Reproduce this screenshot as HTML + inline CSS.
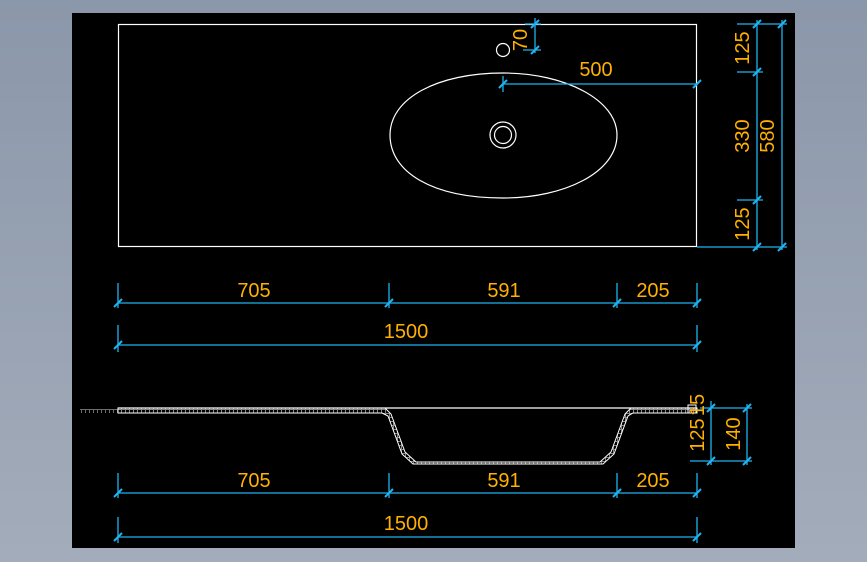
<!DOCTYPE html>
<html><head><meta charset="utf-8"><style>
html,body{margin:0;padding:0;width:867px;height:562px;overflow:hidden;background:#939eb0}
svg{display:block}
text{font-family:"Liberation Sans Narrow","Liberation Sans",sans-serif;fill:#ffb000;font-size:20px}
</style></head><body>
<svg width="867" height="562" viewBox="0 0 867 562" xmlns="http://www.w3.org/2000/svg">
<defs>
<linearGradient id="bg" x1="0" y1="0" x2="0" y2="1"><stop offset="0" stop-color="#8b97aa"/><stop offset="1" stop-color="#a3acba"/></linearGradient>
<pattern id="h" width="4" height="4" patternUnits="userSpaceOnUse"><rect width="4" height="4" fill="#000"/><rect x="0" y="1" width="4" height="1" fill="#888"/><rect x="1" y="0" width="1" height="4" fill="#888"/></pattern>
</defs>
<rect width="867" height="562" fill="url(#bg)"/>
<rect x="72" y="13" width="723" height="535" fill="#000"/>
<g fill="none" stroke="#fff" stroke-width="1.2">
<rect x="118.5" y="24.5" width="578" height="222"/>
<path d="M503,73 C565,73 617,100 617,135 C617,172 565,198 503,198 C432,198 390,172 390,135 C390,98 438,73 503,73Z"/>
<circle cx="503" cy="135" r="13"/><circle cx="503" cy="135" r="8.5"/>
<circle cx="503" cy="50" r="6.5"/>
</g>
<g stroke="#1eb4f0" stroke-width="1.3" fill="none">
<line x1="535" y1="18" x2="535" y2="53"/><line x1="523" y1="50" x2="541" y2="50"/><line x1="525" y1="24" x2="541" y2="24"/>
<line x1="503" y1="84" x2="697" y2="84"/><line x1="503" y1="76" x2="503" y2="92"/>
<line x1="737" y1="24" x2="787" y2="24"/><line x1="737" y1="72" x2="763" y2="72"/><line x1="737" y1="200" x2="763" y2="200"/><line x1="697" y1="247" x2="787" y2="247"/>
<line x1="757" y1="20" x2="757" y2="250"/><line x1="782" y1="20" x2="782" y2="250"/>
<line x1="118" y1="303" x2="697" y2="303"/><line x1="118" y1="345" x2="697" y2="345"/>
<line x1="118" y1="283" x2="118" y2="308"/><line x1="389" y1="283" x2="389" y2="308"/><line x1="617" y1="283" x2="617" y2="308"/><line x1="697" y1="283" x2="697" y2="308"/>
<line x1="118" y1="325" x2="118" y2="352"/><line x1="697" y1="325" x2="697" y2="352"/>
<line x1="118" y1="493" x2="697" y2="493"/><line x1="118" y1="537" x2="697" y2="537"/>
<line x1="118" y1="473" x2="118" y2="498"/><line x1="389" y1="473" x2="389" y2="498"/><line x1="617" y1="473" x2="617" y2="498"/><line x1="697" y1="473" x2="697" y2="498"/>
<line x1="118" y1="517" x2="118" y2="543"/><line x1="697" y1="517" x2="697" y2="543"/>
<line x1="711" y1="401" x2="711" y2="465"/><line x1="747" y1="404" x2="747" y2="465"/>
<line x1="700" y1="408" x2="752" y2="408"/><line x1="690" y1="461" x2="752" y2="461"/>
</g>
<g stroke="#1eb4f0" stroke-width="2">
<path d="M531,54 l8,-8 M531,28 l8,-8 M499,88 l8,-8 M693,88 l8,-8 M753,28 l8,-8 M753,76 l8,-8 M753,204 l8,-8 M753,251 l8,-8 M778,28 l8,-8 M778,251 l8,-8
M114,307 l8,-8 M385,307 l8,-8 M613,307 l8,-8 M693,307 l8,-8 M114,349 l8,-8 M693,349 l8,-8
M114,497 l8,-8 M385,497 l8,-8 M613,497 l8,-8 M693,497 l8,-8 M114,541 l8,-8 M693,541 l8,-8
M707,412 l8,-8 M707,465 l8,-8 M743,412 l8,-8 M743,465 l8,-8"/>
</g>
<path d="M80,409 H118 V413 H80Z" fill="url(#h)" opacity="0.8"/>
<path d="M118,408 H385 L391,414 L405,452 L416,462 H600 L611,452 L625,414 L631,408 H697 V413 H633 L628,416 L614,454 L603,464 H413 L402,454 L388,416 L382,413 H118Z" fill="url(#h)" stroke="#fff" stroke-width="1"/>
<line x1="118" y1="408" x2="697" y2="408" stroke="#fff" stroke-width="1.2"/>
<line x1="500" y1="462" x2="515" y2="462" stroke="#fff"/>
<rect x="688" y="405" width="8" height="8" fill="none" stroke="#fff"/>
<text x="254" y="297" text-anchor="middle">705</text>
<text x="504" y="297" text-anchor="middle">591</text>
<text x="653" y="297" text-anchor="middle">205</text>
<text x="406" y="338" text-anchor="middle">1500</text>
<text x="254" y="487" text-anchor="middle">705</text>
<text x="504" y="487" text-anchor="middle">591</text>
<text x="653" y="487" text-anchor="middle">205</text>
<text x="406" y="530" text-anchor="middle">1500</text>
<text x="596" y="76" text-anchor="middle">500</text>
<text transform="translate(527,40) rotate(-90)" text-anchor="middle">70</text>
<text transform="translate(749,48) rotate(-90)" text-anchor="middle">125</text>
<text transform="translate(749,136) rotate(-90)" text-anchor="middle">330</text>
<text transform="translate(749,224) rotate(-90)" text-anchor="middle">125</text>
<text transform="translate(774,136) rotate(-90)" text-anchor="middle">580</text>
<text transform="translate(704,435) rotate(-90)" text-anchor="middle">125</text>
<text transform="translate(704,405) rotate(-90)" text-anchor="middle">15</text>
<text transform="translate(740,434) rotate(-90)" text-anchor="middle">140</text>
</svg>
</body></html>
